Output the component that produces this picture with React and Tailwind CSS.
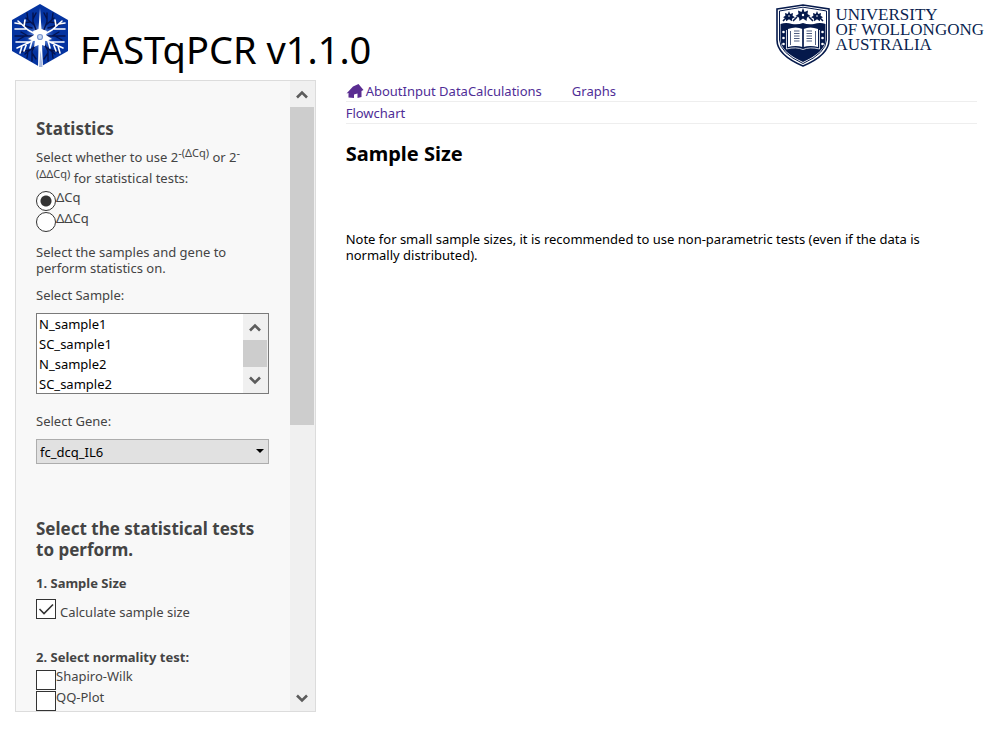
function FastLogo() {
  return (
    <svg viewBox="0 0 56 63" className="h-[63px] w-14" aria-hidden="true">
      <defs>
        <radialGradient id="glow">
          <stop offset="0" stopColor="#d5e2fa" />
          <stop offset="0.4" stopColor="#6f93de" stopOpacity="0.8" />
          <stop offset="1" stopColor="#0433a0" stopOpacity="0" />
        </radialGradient>
      </defs>
      <path d="M28 0 L56 16 V47 L28 63 L0 47 V16 Z" fill="#0433a0" />
      <circle cx="28" cy="33" r="17" fill="url(#glow)" />
      <g fill="none" stroke="#04134f" strokeWidth="1.4" strokeLinecap="round">
        <path d="M31 28 L35 18 L35 9 M34 21 L42 14 M35 15 L32 9 M38 18 L45 19 M40 16 L41 9 M36 24 L50 20" />
        <path d="M25 28 L21 18 L21 9 M22 21 L14 14 M21 15 L24 9 M18 18 L11 19 M16 16 L15 9 M20 24 L6 20" />
        <path d="M31 38 L36 47 L36 57 M34 43 L43 50 M36 49 L32 55 M39 46 L47 48 M40 47 L41 54" />
        <path d="M25 38 L20 47 L20 57 M22 43 L13 50 M20 49 L24 55 M17 46 L9 48 M16 47 L15 54" />
        <path d="M35 32 H53 M40 32 L47 28 M43 32 L50 36 M21 32 H3 M16 32 L9 28 M13 32 L6 36" />
      </g>
      <g fill="none" stroke="#ffffff" strokeWidth="1.6" strokeLinecap="round" strokeLinejoin="round">
        <path d="M29 32 L40 26 L50 17 M44 22 L43 16 M41 25 L53 25 M47 20 L53 19" />
        <path d="M27 32 L16 26 L6 17 M12 22 L13 16 M15 25 L3 25 M9 20 L3 19" />
        <path d="M29 33 L40 39 L51 44 M41 39 L44 47 M39 38 L52 38 M46 42 L48 49 M36 37 L38 44" />
        <path d="M27 33 L16 39 L5 44 M15 39 L12 47 M17 38 L4 38 M10 42 L8 49 M20 37 L18 44" />
      </g>
      <path
        d="M28 4 L29.500 25 L35 27 L34 31 L40 35 L33 37 L33 42 L30 41 L31 63 H26 L26.500 41 L22 43 L23 37 L16 35 L22 31 L21 27 L26.500 25 Z"
        fill="#ffffff"
      />
      <circle cx="28" cy="33" r="2.500" fill="#c5d6f2" stroke="#7794cf" strokeWidth="1.200" />
      <path d="M28.500 46 L30.500 63 H27 Z" fill="#0433a0" fillOpacity="0.35" />
    </svg>
  );
}

function Shield() {
  const navy = '#05194b';
  const leaf = 'M0 -7 L1.500 -3 L5 -4.500 L4.500 -1 L7.500 1 L4 2.500 L3.500 6 L0 3.500 L-3.500 6 L-4 2.500 L-7.500 1 L-4.500 -1 L-5 -4.500 L-1.500 -3 Z';
  return (
    <svg viewBox="0 0 54 63" className="h-[63px] w-[54px]" aria-hidden="true">
      <path
        d="M1 5 Q14 3 27 1 Q40 3 53 5 V36 Q53 51 27 62 Q1 51 1 36 Z"
        fill="#ffffff"
        stroke={navy}
        strokeWidth="1.600"
      />
      <path
        d="M3.500 7 Q15 5 27 3.200 Q39 5 50.500 7 V36 Q50 49 27 59.500 Q4 49 3.500 36 Z"
        fill="none"
        stroke={navy}
        strokeWidth="1"
      />
      <path d="M4.500 20 Q10 18 16 20 Q22 21 27 19 Q32 21 38 20 Q44 18 49.500 20 V36 Q49 48 27 58 Q5 48 4.500 36 Z" fill={navy} />
      <g fill={navy}>
        <path d={leaf} transform="translate(27 11)" />
        <path d={leaf} transform="translate(13 12.500) scale(0.8)" />
        <path d={leaf} transform="translate(41 12.500) scale(0.8)" />
      </g>
      <path d="M17 17 L21 13 M37 17 L33 13 M7 17 L10 14 M47 17 L44 14" stroke={navy} strokeWidth="1.600" />
      <g fill="#ffffff">
        <circle cx="27" cy="11" r="1.200" />
        <circle cx="13" cy="12" r="0.800" />
        <circle cx="41" cy="12" r="0.800" />
        <path d="M12 25 Q20 22 26.500 25 V43 Q20 41 12 43 Z M42 25 Q34 22 27.500 25 V43 Q34 41 42 43 Z" />
        <circle cx="7.500" cy="28" r="1.300" />
        <circle cx="7.500" cy="34" r="1.300" />
        <circle cx="7.500" cy="40" r="1.300" />
        <circle cx="46.500" cy="28" r="1.300" />
        <circle cx="46.500" cy="34" r="1.300" />
        <circle cx="46.500" cy="40" r="1.300" />
      </g>
      <path d="M10.500 26 V45 Q20 42.500 27 45.500 Q34 42.500 43.500 45 V26" fill="none" stroke="#ffffff" strokeWidth="0.800" />
      <path
        d="M14.500 27 V41 M18 27 H23.500 M18 29.500 H23.500 M18 32 H23.500 M18 34.500 H23.500 M18 37 H23.500 M30.500 27 H36 M30.500 29.500 H36 M30.500 32 H36 M30.500 34.500 H36 M30.500 37 H36 M39.500 27 V41"
        stroke={navy}
        strokeWidth="0.700"
      />
      <path d="M27 25 V43" stroke={navy} strokeWidth="1.400" />
    </svg>
  );
}

function Chevron({ down }) {
  return (
    <svg viewBox="0 0 12 9" className="h-[9px] w-3" fill="none" stroke="#5c5c5c" strokeWidth="2.600" aria-hidden="true">
      <path d={down ? 'M1 1.500 L6 6.500 L11 1.500' : 'M1 7.500 L6 2.500 L11 7.500'} />
    </svg>
  );
}

function ScrollBar({ name, thumb }) {
  return (
    <div className="flex w-[25px] shrink-0 flex-col bg-[#f0f0f0]">
      <button type="button" aria-label={`Scroll ${name} up`} className="flex h-[26px] shrink-0 items-center justify-center">
        <Chevron />
      </button>
      <div className="flex-1 pr-px">
        <div className={`bg-[#cdcdcd] ${thumb}`} />
      </div>
      <button type="button" aria-label={`Scroll ${name} down`} className="flex h-[26px] shrink-0 items-center justify-center">
        <Chevron down />
      </button>
    </div>
  );
}

function Choice({ type, name, label, checked }) {
  return (
    <label className="flex h-[21px] items-start leading-3">
      <input
        type={type}
        name={name}
        defaultChecked={checked}
        className={
          type === 'radio'
            ? 'size-5 shrink-0 appearance-none rounded-full border border-[#333] bg-white checked:bg-[radial-gradient(circle,#333_5px,white_6px)]'
            : 'size-5 shrink-0 appearance-none border border-[#333] bg-white'
        }
      />
      {label}
    </label>
  );
}

const samples = ['N_sample1', 'SC_sample1', 'N_sample2', 'SC_sample2', 'N_sample3', 'SC_sample3'];

function Sidebar() {
  return (
    <aside className="flex h-[85vh] overflow-hidden border border-[#dcdcdc] bg-[#f8f8f8] text-[#444]">
      <form className="min-w-0 flex-1 pt-[37px] pr-[21px] pl-5">
        <h2 className="text-[17px] leading-[21px] font-bold">Statistics</h2>
        <p className="mt-2 leading-[21px]">
          Select whether to use 2<sup className="text-[11px]">-(ΔCq)</sup> or 2
          <sup className="text-[11px]">-<br />(ΔΔCq)</sup> for statistical tests:
        </p>
        <div className="mt-0.5">
          <Choice type="radio" name="method" label="ΔCq" checked />
          <Choice type="radio" name="method" label="ΔΔCq" />
        </div>
        <p className="mt-[11px]">Select the samples and gene to perform statistics on.</p>
        <label htmlFor="sample" className="mt-[11px] block">Select Sample:</label>
        <div className="mt-2.5 flex h-[81px] border border-[#7a7a7a] bg-white">
          <select
            id="sample"
            multiple
            size={4}
            className="min-w-0 flex-1 overflow-hidden pt-px pl-0.5 text-black outline-none"
          >
            {samples.map((s) => (
              <option key={s} className="h-5 p-0 leading-5">{s}</option>
            ))}
          </select>
          <ScrollBar name="samples" thumb="h-full" />
        </div>
        <label htmlFor="gene" className="mt-[19px] block">Select Gene:</label>
        <div className="relative mt-2.5">
          <select
            id="gene"
            className="block h-[25px] w-full appearance-none border border-[#adadad] bg-[#e1e1e1] pl-[3px] text-black"
          >
            <option>fc_dcq_IL6</option>
          </select>
          <svg viewBox="0 0 8 4" className="pointer-events-none absolute top-2.5 right-[5px] h-1 w-2" aria-hidden="true">
            <path d="M0 0 H8 L4 4 Z" fill="#000" />
          </svg>
        </div>
        <h2 className="mt-[54px] text-[17px] leading-[21px] font-bold">Select the statistical tests to perform.</h2>
        <h3 className="mt-[15px] font-bold">1. Sample Size</h3>
        <label className="mt-2 flex items-start gap-1">
          <span className="relative flex">
            <input type="checkbox" defaultChecked className="size-5 appearance-none border border-[#333] bg-white" />
            <svg viewBox="0 0 20 20" className="pointer-events-none absolute inset-0 size-5" fill="none" stroke="#333" strokeWidth="1.600" aria-hidden="true">
              <path d="M3.500 10 L8 14.500 L17 5.500" />
            </svg>
          </span>
          <span className="pt-[5px]">Calculate sample size</span>
        </label>
        <h3 className="mt-[29px] font-bold">2. Select normality test:</h3>
        <div className="mt-[5px]">
          <Choice type="checkbox" name="normality" label="Shapiro-Wilk" />
          <Choice type="checkbox" name="normality" label="QQ-Plot" />
        </div>
      </form>
      <ScrollBar name="sidebar" thumb="h-[55%]" />
    </aside>
  );
}

export default function App() {
  return (
    <div className="min-h-screen bg-white font-['Noto_Sans','Open_Sans',sans-serif] text-[13px] leading-4 text-black">
      <header className="flex h-20 items-start justify-between pt-1 pr-2 pl-3">
        <div className="flex gap-3">
          <FastLogo />
          <h1 className="pt-[19px] text-[38px] leading-[52px]">FASTqPCR v1.1.0</h1>
        </div>
        <div className="flex gap-1.5">
          <Shield />
          <p className="pt-[3px] font-['Liberation_Serif',serif] text-[17px] leading-[15px] whitespace-nowrap text-[#0a1f50]">
            UNIVERSITY<br />OF WOLLONGONG<br />AUSTRALIA
          </p>
        </div>
      </header>
      <div className="grid grid-cols-3">
        <div className="px-[15px]">
          <Sidebar />
        </div>
        <main className="col-span-2 px-[15px]">
          <nav className="text-[#4f2d96]">
            <div className="flex h-[22px] items-center border-b border-[#eee]">
              <a href="#about" className="flex items-center gap-0.5">
                <svg viewBox="0 0 18 16" className="h-4 w-[18px]" fill="#5a2d91" aria-hidden="true">
                  <path d="M0.500 10.500 L7 3.500 L12.500 1 L17.500 7 L15.500 8 V14 L11.500 15 V10.500 L8 11.500 V15 L2.500 14.500 V10 Z" />
                </svg>
                About
              </a>
              <a href="#input">Input Data</a>
              <a href="#calculations">Calculations</a>
              <a href="#graphs" className="ml-[30px]">Graphs</a>
            </div>
            <div className="flex h-[22px] items-center border-b border-[#eee]">
              <a href="#flowchart">Flowchart</a>
            </div>
          </nav>
          <h2 className="mt-4 text-[20px] leading-7 font-bold">Sample Size</h2>
          <p className="mt-[63px]">
            Note for small sample sizes, it is recommended to use non-parametric tests (even if the data is normally
            distributed).
          </p>
        </main>
      </div>
    </div>
  );
}
